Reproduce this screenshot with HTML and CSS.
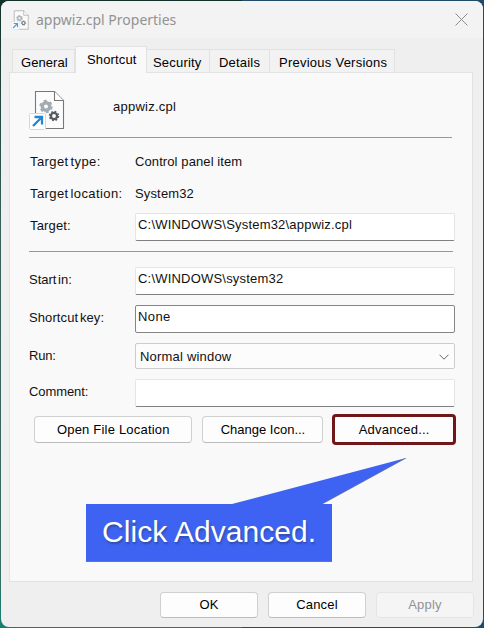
FILE: index.html
```html
<!DOCTYPE html>
<html lang="en">
<head>
<meta charset="utf-8">
<title>appwiz.cpl Properties</title>
<link rel="stylesheet" href="styles.css">
</head>
<body>
<svg width="0" height="0" class="defs">
  <symbol id="file" viewBox="0 0 36 40">
    <path d="M6.500 1.500H25.500L34.500 10.500V38.500H6.500Z" fill="#fcfcfc" stroke="#777" stroke-width="1.100"/>
    <path d="M25.500 1.500V10.500H34.500" fill="#fff" stroke="#777" stroke-width="1.100"/>
    <circle cx="17" cy="16.500" r="3.700" fill="none" stroke="#a3abb2" stroke-width="3.400"/>
    <circle cx="17" cy="16.500" r="5.700" fill="none" stroke="#a3abb2" stroke-width="2" stroke-dasharray="3 2.969"/>
    <circle cx="25" cy="26" r="3.100" fill="none" stroke="#555b60" stroke-width="2.300"/>
    <circle cx="25" cy="26" r="4.500" fill="none" stroke="#555b60" stroke-width="1.500" stroke-dasharray="1.800 1.734"/>
    <rect x=".5" y="23.500" width="16" height="16" rx="1" fill="#fff" stroke="#d5d8dc"/>
    <path d="M4 36L12.500 27.500M5.500 27H13V34.500" fill="none" stroke="#2386cf" stroke-width="2.300"/>
  </symbol>
</svg>
<main class="window">
  <header class="titlebar">
    <svg class="title-icon"><use href="#file"/></svg>
    <h1>appwiz.cpl Properties</h1>
    <svg class="close" viewBox="0 0 13 13"><path d="M.5 .5L12.500 12.500M12.500 .5L.5 12.500" fill="none" stroke="#8c8c8c" stroke-width="1"/></svg>
  </header>
  <nav class="tabs">
    <span class="tab general">General</span>
    <span class="tab active">Shortcut</span>
    <span class="tab security">Security</span>
    <span class="tab details">Details</span>
    <span class="tab previous">Previous Versions</span>
  </nav>
  <section class="panel">
    <div class="heading"><svg class="file-icon"><use href="#file"/></svg><span class="name">appwiz.cpl</span></div>
    <div class="row type"><span class="label">Target type:</span><span class="value">Control panel item</span></div>
    <div class="row location"><span class="label">Target location:</span><span class="value">System32</span></div>
    <div class="row target"><span class="label">Target:</span><div class="field">C:\WINDOWS\System32\appwiz.cpl</div></div>
    <div class="rule"></div>
    <div class="row start"><span class="label">Start in:</span><div class="field">C:\WINDOWS\system32</div></div>
    <div class="row key"><span class="label">Shortcut key:</span><div class="field outlined">None</div></div>
    <div class="row run"><span class="label">Run:</span><div class="select"><span>Normal window</span><svg viewBox="0 0 10 6"><path d="M.5 .7L5 5.200L9.500 .7" fill="none" stroke="#666" stroke-width="1"/></svg></div></div>
    <div class="row comment"><span class="label">Comment:</span><div class="field"></div></div>
    <div class="actions">
      <div class="button open">Open File Location</div>
      <div class="button change">Change Icon...</div>
      <div class="button advanced">Advanced...</div>
    </div>
  </section>
  <footer class="footer">
    <div class="button">OK</div>
    <div class="button">Cancel</div>
    <div class="button disabled">Apply</div>
  </footer>
</main>
<aside class="callout">
  <svg viewBox="0 0 320 104"><path d="M0 46H146L320 0L236 46H246V103.500H0Z" fill="#3e63f2"/><path d="M0 103.500H246M236 46L320 0" fill="none" stroke="#59669d" stroke-width=".8"/></svg>
  <span>Click Advanced.</span>
</aside>
</body>
</html>
```

FILE: styles.css
```css
* { box-sizing: border-box; }
body {
  margin: 0;
  width: 484px;
  height: 628px;
  padding: 1px;
  overflow: hidden;
  background: linear-gradient(90deg, transparent 50%, #204a67 50%), linear-gradient(#12312b, #365f58 35%, #3b6b65 90%, #168070);
  font: 13px/16px "Liberation Sans", Arial, sans-serif;
  letter-spacing: .15px;
  color: #111;
}
.defs { position: absolute; }
.window { width: 482px; height: 626px; border-radius: 8px; background: #efefef; overflow: hidden; }
.titlebar { display: flex; align-items: center; height: 37px; padding: 0 15px 0 10px; background: #f3f3f3; }
.title-icon { width: 18px; height: 20px; opacity: .8; }
h1 { flex: 1; margin: 0 0 0 7px; font: 14px/20px "Noto Sans", sans-serif; letter-spacing: 0; color: #929292; }
.close { width: 13px; height: 13px; }
.tabs { display: flex; align-items: flex-end; height: 34px; padding-left: 11px; }
.tab { height: 23px; border: 1px solid #e2e2e2; border-width: 1px 1px 0 0; padding: 5px 0 0 8px; background: #f2f2f2; white-space: nowrap; color: #000; }
.general { width: 63px; border-left-width: 1px; letter-spacing: .05px; }
.active { width: 72px; height: 27px; margin-bottom: -1px; border-left-width: 1px; padding: 5px 0 0 11px; background: #f9f9f9; position: relative; }
.security { width: 63px; padding-left: 6px; letter-spacing: .2px; }
.details { width: 60px; padding-left: 9px; letter-spacing: .2px; }
.previous { width: 125px; padding-left: 9px; letter-spacing: .25px; }
.panel { width: 464px; height: 510px; margin-left: 8px; padding: 17px 17px 0 20px; border: 1px solid #e2e2e2; background: #f9f9f9; }
.heading { display: flex; align-items: flex-start; width: 423px; height: 48px; margin-left: -1px; border-bottom: 1px solid #999; }
.file-icon { width: 36px; height: 40px; }
.name { margin: 9px 0 0 48px; letter-spacing: .25px; }
.row { display: grid; grid-template-columns: 105px 320px; align-items: center; }
.type { margin-top: 16px; }
.type .label { letter-spacing: .4px; word-spacing: -2px; }
.type .value { letter-spacing: .1px; }
.location { margin-top: 16px; }
.location .label { letter-spacing: .4px; word-spacing: -2px; }
.target { margin-top: 11px; }
.target .label { margin-top: -3px; letter-spacing: .15px; }
.rule { width: 424px; height: 1px; margin: 10px 0 15px -1px; background: #999; }
.start .label { margin: -3px 0 0 -1px; letter-spacing: 0; word-spacing: -2px; }
.key .label { margin: -3px 0 0 -1px; letter-spacing: .1px; word-spacing: -2px; }
.run .label { margin-left: -1px; letter-spacing: -.2px; }
.comment .label { margin: -3px 0 0 -1px; letter-spacing: -.1px; }
.key, .run { margin-top: 10px; }
.comment { margin-top: 10px; }
.field { height: 28px; padding: 3px 2px; border: 1px solid #e5e5e5; border-bottom-color: #808080; border-radius: 2px; background: #fff; letter-spacing: .2px; }
.outlined { border-color: #858585; letter-spacing: .4px; }
.select { display: flex; height: 26px; padding: 1px 5px 0 4px; align-items: center; justify-content: space-between; border: 1px solid #ccc; border-radius: 2px; background: #fcfcfc; letter-spacing: .2px; }
.select svg { width: 10px; height: 6px; }
.actions { display: flex; align-items: center; height: 31px; margin: 7px 0 0 4px; }
.button { display: flex; align-items: center; justify-content: center; height: 27px; border: 1px solid #d0d0d0; border-bottom-color: #bcbcbc; border-radius: 4px; background: #fdfdfd; color: #000; letter-spacing: .2px; white-space: nowrap; }
.open { width: 158px; padding-left: 1px; }
.change { width: 122px; margin-left: 10px; padding-left: 1px; letter-spacing: 0; }
.advanced { width: 124px; height: 31px; margin-left: 8px; border: 3px solid #701719; }
.actions .advanced { margin-left: 8px; transform: translateX(1px); }
.footer { display: flex; gap: 10px; padding: 10px 0 0 159px; }
.footer .button { width: 98px; height: 26px; }
.footer .disabled { border-color: #e5e5e5; background: #f5f5f5; color: #929292; }
.callout { position: absolute; left: 86px; top: 458px; width: 320px; height: 104px; }
.callout svg { display: block; width: 320px; height: 104px; }
.callout span { position: absolute; left: 16px; top: 56px; font-size: 30px; line-height: 36px; letter-spacing: .05px; color: #fff; text-shadow: 1px 2px 2px #2b438fbb; white-space: nowrap; }
```
